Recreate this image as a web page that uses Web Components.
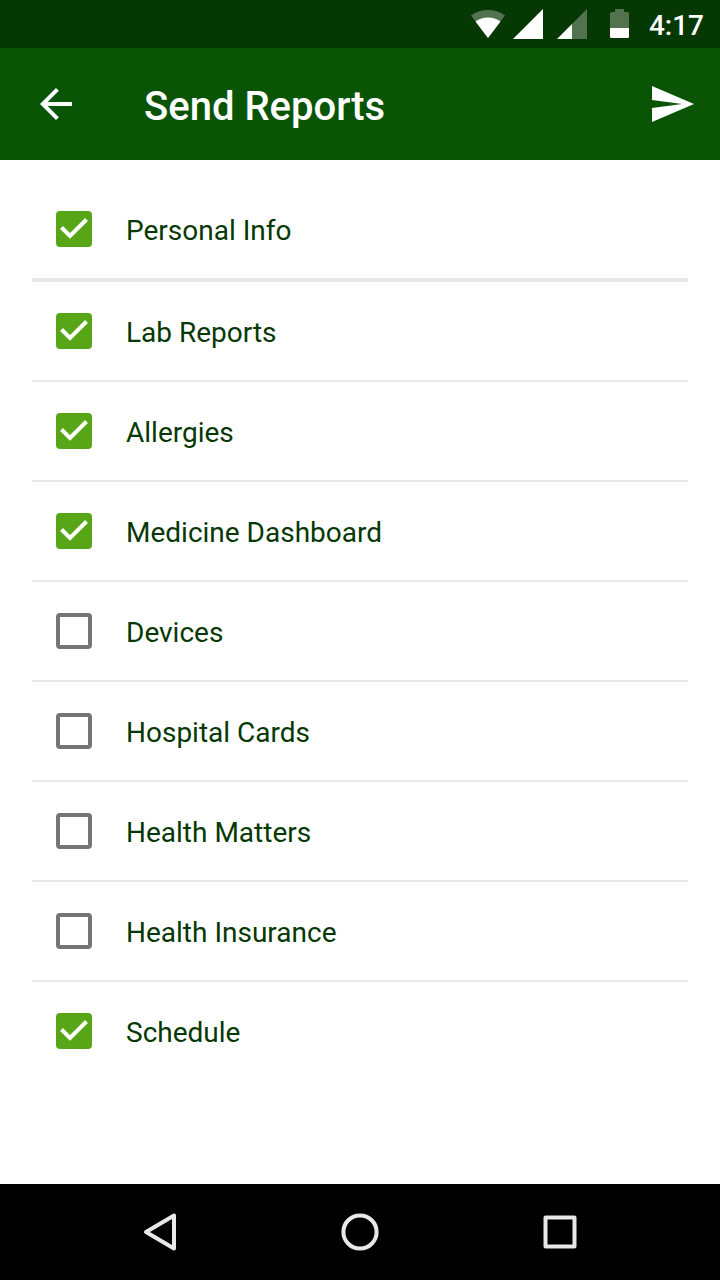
<!DOCTYPE html>
<html lang="en">
<head>
<meta charset="utf-8">
<meta name="viewport" content="width=device-width, initial-scale=1">
<title>Send Reports</title>
<style>
  html, body { margin: 0; height: 100%; }
  body { font-family: Roboto, "Liberation Sans", sans-serif; background: #fff; }
</style>
</head>
<body>
<report-screen></report-screen>

<template id="status-bar">
  <style>
    :host { display: flex; align-items: center; justify-content: flex-end; height: 48px; padding-right: 16px; background: #063804; color: #fff; }
    svg { display: block; fill: #fff; }
    .wifi { margin-right: 8px; }
    .signal { margin-right: 14px; }
    .weak { margin-right: 22px; }
    .battery { margin-right: 20px; }
    time { font-size: 28px; font-weight: 500; line-height: 32px; padding-top: 4px; }
  </style>
  <svg class="wifi" width="35" height="30" viewBox="-1 0 35 30" aria-hidden="true">
    <path fill-opacity=".3" d="M0 6.500Q7.500 1 17 1T34 6.500L17 29Z"/>
    <path d="M4.500 12.500Q10 8.500 17 8.500T29.500 12.500L17 29Z"/>
  </svg>
  <svg class="signal" width="30" height="30" viewBox="0 0 30 30" aria-hidden="true"><path d="M0 30H30V0Z"/></svg>
  <svg class="weak" width="30" height="30" viewBox="0 0 30 30" aria-hidden="true">
    <path fill-opacity=".3" d="M15 30H30V0L15 15Z"/><path d="M0 30H15V15Z"/>
  </svg>
  <svg class="battery" width="20" height="30" viewBox="-1 0 20 30" aria-hidden="true">
    <path fill-opacity=".3" d="M0 19V4.500Q0 3 1.500 3H5V0H14V3H17.500Q19 3 19 4.500V19Z"/>
    <path d="M0 19H19V27.500Q19 29 17.500 29H1.500Q0 29 0 27.500Z"/>
  </svg>
  <time>4:17</time>
</template>

<template id="app-bar">
  <style>
    :host { display: flex; align-items: center; height: 112px; box-sizing: border-box; padding: 0 24px 0 32px; background: #0a5406; color: #fff; }
    h1 { flex: 1; margin: 0; padding: 6px 0 0 64px; font-size: 40px; font-weight: 500; line-height: 48px; }
    button { border: 0; padding: 0; background: none; color: inherit; }
    svg { display: block; fill: currentColor; }
  </style>
  <button type="button" aria-label="Back"><svg width="48" height="48" viewBox="0 0 24 24"><path d="M20 11H7.830l5.590-5.590L12 4l-8 8 8 8 1.410-1.410L7.830 13H20v-2z"/></svg></button>
  <h1><slot></slot></h1>
  <button type="button" aria-label="Send"><svg width="48" height="48" viewBox="0 0 24 24"><path d="M2.010 21L23 12 2.010 3 2 10l15 2-15 2z"/></svg></button>
</template>

<template id="report-option">
  <style>
    :host { display: block; border-bottom: 2px solid #e7e7e7; }
    :host([lead]) { border-bottom-width: 4px; }
    :host(:last-of-type) { border-bottom: 0; }
    label { display: flex; align-items: center; height: 98px; padding-left: 24px; gap: 34px; color: #063804; }
    .box { display: grid; flex: none; width: 36px; height: 36px; }
    input, svg { grid-area: 1 / 1; }
    input { appearance: none; box-sizing: border-box; width: 36px; height: 36px; margin: 0; border: 4px solid #757575; border-radius: 4px; }
    input:checked { border-color: #58a618; background: #58a618; }
    svg { visibility: hidden; pointer-events: none; fill: none; stroke: #fff; stroke-width: 4; }
    input:checked + svg { visibility: visible; }
    .text { padding-top: 4px; font-size: 28px; line-height: 32px; }
  </style>
  <label>
    <span class="box"><input type="checkbox"><svg width="36" height="36" viewBox="0 0 36 36" aria-hidden="true"><path d="M5.500 16.500L14 25L30.500 8.500"/></svg></span>
    <span class="text"><slot></slot></span>
  </label>
</template>

<template id="nav-bar">
  <style>
    :host { display: flex; height: 96px; justify-content: center; background: #000; }
    button { flex: 0 1 200px; display: grid; place-items: center; border: 0; padding: 0; background: none; }
    svg { display: block; fill: none; stroke: #e8e8e8; stroke-width: 4; stroke-linejoin: round; }
  </style>
  <button type="button" aria-label="Back"><svg width="40" height="40" viewBox="0 0 40 40"><path d="M34 3.500V36.500L6 20Z"/></svg></button>
  <button type="button" aria-label="Home"><svg width="40" height="40" viewBox="0 0 40 40"><circle cx="20" cy="20" r="16.600"/></svg></button>
  <button type="button" aria-label="Recent apps"><svg width="40" height="40" viewBox="0 0 40 40"><rect x="5.500" y="5.500" width="29" height="29"/></svg></button>
</template>

<template id="report-screen">
  <style>
    :host { display: flex; flex-direction: column; min-height: 100vh; }
    main { flex: 1; padding: 20px 32px; }
  </style>
  <status-bar></status-bar>
  <app-bar>Send Reports</app-bar>
  <main>
    <report-option lead checked>Personal Info</report-option>
    <report-option checked>Lab Reports</report-option>
    <report-option checked>Allergies</report-option>
    <report-option checked>Medicine Dashboard</report-option>
    <report-option>Devices</report-option>
    <report-option>Hospital Cards</report-option>
    <report-option>Health Matters</report-option>
    <report-option>Health Insurance</report-option>
    <report-option checked>Schedule</report-option>
  </main>
  <nav-bar></nav-bar>
</template>

<script>
  class TemplateElement extends HTMLElement {
    constructor() {
      super();
      const template = document.getElementById(this.localName);
      this.attachShadow({ mode: 'open' }).append(template.content.cloneNode(true));
    }
  }
  class StatusBar extends TemplateElement {}
  class AppBar extends TemplateElement {}
  class NavBar extends TemplateElement {}
  class ReportScreen extends TemplateElement {}
  class ReportOption extends TemplateElement {
    connectedCallback() {
      this.shadowRoot.querySelector('input').checked = this.hasAttribute('checked');
    }
  }
  customElements.define('status-bar', StatusBar);
  customElements.define('app-bar', AppBar);
  customElements.define('report-option', ReportOption);
  customElements.define('nav-bar', NavBar);
  customElements.define('report-screen', ReportScreen);
</script>
</body>
</html>
